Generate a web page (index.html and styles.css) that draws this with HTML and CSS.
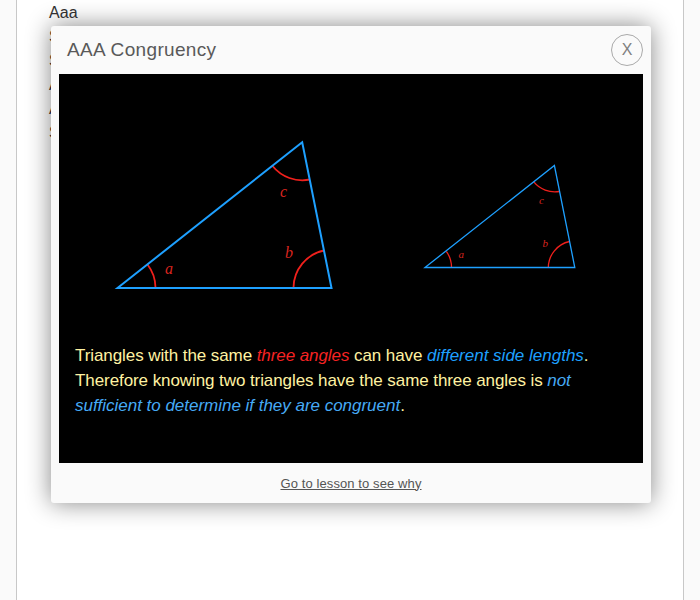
FILE: index.html
```html
<!DOCTYPE html>
<html lang="en">
<head>
<meta charset="utf-8">
<title>AAA Congruency</title>
<link rel="stylesheet" href="styles.css">
</head>
<body>
<main class="page">
  <ul class="topics">
    <li>Aaa</li>
    <li>Sas</li>
    <li>Sss</li>
    <li>Asa</li>
    <li>Aas</li>
    <li>Ssa</li>
  </ul>
</main>
<section class="popup" role="dialog" aria-labelledby="title">
  <header class="popup-header">
    <h1 class="popup-title" id="title">AAA Congruency</h1>
    <button class="close" type="button">X</button>
  </header>
  <div class="board">
    <svg class="diagram" viewBox="0 0 584 269" width="584" height="269">
      <g class="arcs large">
        <path d="M88.500 190.500 A38.500 38.500 0 0 1 96.500 213.500"/>
        <path d="M234.500 213.500 A38.500 38.500 0 0 1 265 176.500"/>
        <path d="M213.500 92 A38.500 38.500 0 0 0 251 105.500"/>
      </g>
      <path class="side large" d="M58.500 214 L243.200 68.300 L272.500 214 Z"/>
      <g class="arcs">
        <path d="M387.300 177.300 A27 27 0 0 1 392.500 193.500"/>
        <path d="M489.300 193.500 A27 27 0 0 1 510.500 167.500"/>
        <path d="M474.600 107.700 A27 27 0 0 0 500.500 117.500"/>
      </g>
      <path class="side" d="M366 193.500 L495.400 91.500 L515.800 193.500 Z"/>
      <g class="angle-name large">
        <text x="106" y="200">a</text>
        <text x="226" y="184">b</text>
        <text x="221" y="123">c</text>
      </g>
      <g class="angle-name">
        <text x="399.500" y="183.500">a</text>
        <text x="483.500" y="173">b</text>
        <text x="480" y="130">c</text>
      </g>
    </svg>
    <p class="explain">Triangles with the same <em class="red">three angles</em> can have <em class="blue">different side lengths</em>. Therefore knowing two triangles have the same three angles is <em class="sky">not sufficient to determine if they are congruent</em>.</p>
  </div>
  <footer class="popup-footer"><a class="lesson" href="#">Go to lesson to see why</a></footer>
</section>
</body>
</html>
```
FILE: styles.css
```css
* { box-sizing: border-box; }
html, body { height: 100%; }
body {
  margin: 0;
  overflow: hidden;
  background: #fafafa;
  font-family: "Liberation Sans", Arial, sans-serif;
}
.page {
  height: 100%;
  margin: 0 16px;
  padding: 1px 0 0 32px;
  background: #fff;
  border: solid #c8c8c8;
  border-width: 0 1px;
}
.topics {
  margin: 0;
  padding: 0;
  list-style: none;
  color: #333;
  font-size: 16px;
  line-height: 24px;
  letter-spacing: .15px;
}
.popup {
  position: absolute;
  left: 51px;
  top: 26px;
  width: 600px;
  height: 477px;
  display: flex;
  flex-direction: column;
  border-radius: 3px;
  background: #fafafa;
  box-shadow: 0 0 24px rgba(0, 0, 0, .48);
}
.popup-header {
  flex: 0 0 48px;
  display: flex;
  align-items: center;
  justify-content: space-between;
  padding: 0 8px 0 16px;
}
.popup-title {
  margin: 0;
  color: #595959;
  font-size: 19px;
  font-weight: 400;
  letter-spacing: .34px;
}
.close {
  width: 32px;
  height: 32px;
  padding: 0;
  border: 1px solid #aaa;
  border-radius: 50%;
  background: none;
  color: #808080;
  font: 16px/30px "Liberation Sans", Arial, sans-serif;
}
.board {
  flex: 0 0 389px;
  margin: 0 8px;
  background: #000;
}
.diagram { display: block; }
.side { fill: none; stroke: #1ea0ff; stroke-width: 1.3; }
.arcs { fill: none; stroke: #f0201c; stroke-width: 1.3; }
.side.large { stroke-width: 2; }
.arcs.large { stroke-width: 1.8; }
.angle-name {
  fill: #d9251f;
  font: italic 11px "Liberation Serif", "Times New Roman", serif;
}
.angle-name.large { font-size: 16px; }
.explain {
  margin: 0;
  padding: 0 16px;
  color: #fff2a2;
  font-size: 17px;
  line-height: 25px;
  letter-spacing: -.08px;
}
.red { color: #f62323; }
.blue { color: #1ea0ff; letter-spacing: 0; }
.sky { color: #46aaf5; letter-spacing: -.02px; }
.popup-footer {
  flex: 1;
  display: flex;
  align-items: center;
  justify-content: center;
  font-size: 13px;
  letter-spacing: .1px;
}
.lesson { color: #555; }
```
